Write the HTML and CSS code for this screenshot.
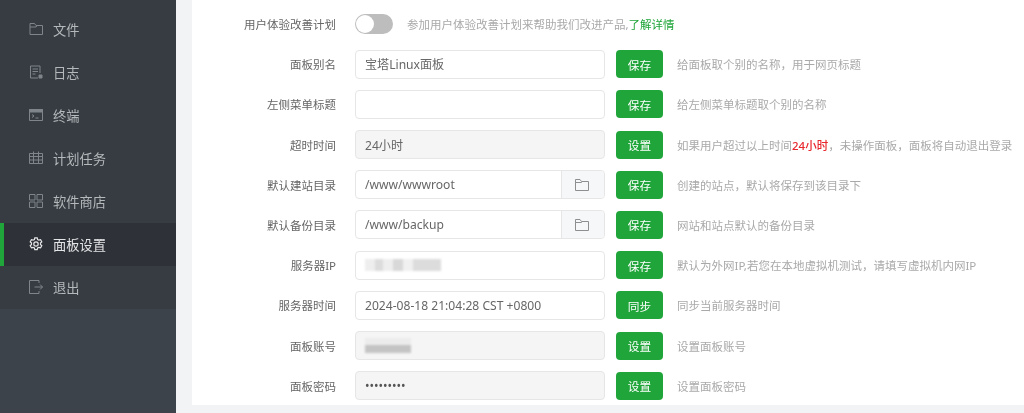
FILE: index.html
```html
<!DOCTYPE html>
<html lang="zh-CN">
<head>
  <meta charset="UTF-8" />
  <meta name="viewport" content="width=device-width, initial-scale=1.0" />
  <title>面板设置</title>
  <link rel="stylesheet" href="styles.css">
</head>
<body>
  <div class="sidebar">
    <ul class="menu">
      <li class="menu-item">
        <svg class="menu-icon" viewBox="0 0 14 14"><path d="M1 12.500V1.500h4.500l1.500 2h6.500v9z M1 5h6l1-1.500"/></svg>
        <span>文件</span>
      </li>
      <li class="menu-item">
        <svg class="menu-icon" viewBox="0 0 14 14"><path d="M11 8V1H1.500v12H9 M3.500 4h5.500 M3.500 6.500h5.500 M3.500 9h3"/><path class="solid" d="M10 10h3v3h-3z"/></svg>
        <span>日志</span>
      </li>
      <li class="menu-item">
        <svg class="menu-icon" viewBox="0 0 14 14"><path d="M.5 1.500h13v11H.5z M3 6.500l2 1.500-2 1.500 M6.500 10h3"/><path class="solid" d="M.5 1.500h13v2.500H.5z"/></svg>
        <span>终端</span>
      </li>
      <li class="menu-item">
        <svg class="menu-icon" viewBox="0 0 14 14"><path d="M.5 2.500h13v10H.5z M.5 5.500h13 M.5 9h13 M4.500 .5v12 M9.500 .5v12"/></svg>
        <span>计划任务</span>
      </li>
      <li class="menu-item">
        <svg class="menu-icon" viewBox="0 0 14 14"><path d="M.5 .5h5.500v5.500H.5z M8 .5h5.500v5.500H8z M.5 8h5.500v5.500H.5z M8 8h5.500v5.500H8z"/></svg>
        <span>软件商店</span>
      </li>
      <li class="menu-item active">
        <svg class="menu-icon" viewBox="0 0 14 14"><path d="M5.800 .8h2.400l.4 1.700 1.300.7 1.700-.5 1.200 2.100-1.300 1.200v1.500l1.300 1.200-1.200 2.100-1.700-.5-1.300.7-.4 1.700H5.800l-.4-1.700-1.300-.7-1.700.5-1.200-2.100 1.300-1.200V6L1.200 4.800l1.200-2.100 1.700.5 1.300-.7z"/><circle cx="7" cy="7" r="2.200"/></svg>
        <span>面板设置</span>
      </li>
      <li class="menu-item">
        <svg class="menu-icon" viewBox="0 0 14 14"><path d="M10 3V.5H.5v13H10V11 M5.500 7h8 M11 4.500L13.500 7 11 9.500"/></svg>
        <span>退出</span>
      </li>
    </ul>
  </div>

  <div class="main">
    <div class="card">
      <div class="row">
        <label class="row-label">用户体验改善计划</label>
        <span class="switch"><span class="knob"></span></span>
        <span class="switch-hint">参加用户体验改善计划来帮助我们改进产品,<a class="link">了解详情</a></span>
      </div>

      <div class="row">
        <label class="row-label">面板别名</label>
        <div class="field">宝塔Linux面板</div>
        <button class="btn">保存</button>
        <span class="hint">给面板取个别的名称，用于网页标题</span>
      </div>

      <div class="row">
        <label class="row-label">左侧菜单标题</label>
        <div class="field"></div>
        <button class="btn">保存</button>
        <span class="hint">给左侧菜单标题取个别的名称</span>
      </div>

      <div class="row">
        <label class="row-label">超时时间</label>
        <div class="field disabled">24小时</div>
        <button class="btn">设置</button>
        <span class="hint">如果用户超过以上时间<b class="warn">24小时</b>，未操作面板，面板将自动退出登录</span>
      </div>

      <div class="row">
        <label class="row-label">默认建站目录</label>
        <div class="field with-addon">
          <span class="field-text">/www/wwwroot</span>
          <span class="addon"><svg class="folder" viewBox="0 0 14 12"><path d="M.5 11.500V.5h4.500l1.500 2h7v9z M.5 3.500h6l1-1"/></svg></span>
        </div>
        <button class="btn">保存</button>
        <span class="hint">创建的站点，默认将保存到该目录下</span>
      </div>

      <div class="row">
        <label class="row-label">默认备份目录</label>
        <div class="field with-addon">
          <span class="field-text">/www/backup</span>
          <span class="addon"><svg class="folder" viewBox="0 0 14 12"><path d="M.5 11.500V.5h4.500l1.500 2h7v9z M.5 3.500h6l1-1"/></svg></span>
        </div>
        <button class="btn">保存</button>
        <span class="hint">网站和站点默认的备份目录</span>
      </div>

      <div class="row">
        <label class="row-label">服务器IP</label>
        <div class="field"><span class="masked masked-ip"></span></div>
        <button class="btn">保存</button>
        <span class="hint">默认为外网IP,若您在本地虚拟机测试，请填写虚拟机内网IP</span>
      </div>

      <div class="row">
        <label class="row-label">服务器时间</label>
        <div class="field">2024-08-18 21:04:28 CST +0800</div>
        <button class="btn">同步</button>
        <span class="hint">同步当前服务器时间</span>
      </div>

      <div class="row">
        <label class="row-label">面板账号</label>
        <div class="field disabled"><span class="masked masked-user"></span></div>
        <button class="btn">设置</button>
        <span class="hint">设置面板账号</span>
      </div>

      <div class="row">
        <label class="row-label">面板密码</label>
        <div class="field disabled pass">•••••••••</div>
        <button class="btn">设置</button>
        <span class="hint">设置面板密码</span>
      </div>
    </div>
  </div>
</body>
</html>
```

FILE: styles.css
```css
* { margin: 0; padding: 0; box-sizing: border-box; }
html, body {
  height: 100%;
  overflow: hidden;
}
body {
  display: flex;
  background: #f2f3f5;
  font-family: "Noto Sans", "Noto Sans CJK SC", sans-serif;
  font-size: 11.5px;
  color: #666;
}

/* sidebar */
.sidebar {
  width: 176px;
  height: 100%;
  background: #3d434b;
  filter: blur(.35px);
}
.menu {
  list-style: none;
  padding-top: 7.5px;
  background: #363c42;
}
.menu-item {
  display: flex;
  align-items: center;
  gap: 10px;
  height: 43px;
  padding-left: 29px;
  font-size: 13.25px;
  color: #b5b9bc;
}
.menu-item.active {
  background: #2e3138;
  border-left: 4px solid #20a53a;
  padding-left: 25px;
  color: #e4e5e6;
}
.menu-icon {
  width: 14px;
  height: 14px;
  fill: none;
  stroke: #7f858a;
  stroke-width: 1;
}
.menu-icon .solid {
  fill: #7f858a;
}
.menu-item.active .menu-icon {
  stroke: #e4e5e6;
  stroke-width: 1.2;
}

/* main */
.main {
  flex: 1;
  padding-left: 16px;
}
.card {
  height: 405px;
  background: #fff;
  padding-top: 9.5px;
  display: flex;
  flex-direction: column;
  gap: 11.2px;
  filter: blur(.35px);
}
.row {
  display: flex;
  align-items: center;
  height: 29px;
}
.row-label {
  width: 144px;
  margin-right: 19px;
  text-align: right;
  color: #666;
}
.switch {
  width: 38px;
  height: 20px;
  border-radius: 10px;
  background: #bdbdbd;
  padding: 1px;
  margin-right: 14px;
}
.knob {
  display: block;
  width: 18px;
  height: 18px;
  border-radius: 50%;
  background: #fff;
}
.switch-hint { color: #a9a9a9; }
.link { color: #20a53a; }

.field {
  display: flex;
  align-items: center;
  width: 250px;
  height: 29px;
  margin-right: 11px;
  padding-left: 9px;
  border: 1px solid #e6e6e6;
  border-radius: 4px;
  background: #fff;
  font-size: 12.1px;
  color: #666;
}
.field.disabled { background: #f5f5f5; }
.field.pass { font-size: 12px; color: #555; }
.with-addon { padding-left: 0; }
.field-text {
  flex: 1;
  padding-left: 9px;
}
.addon {
  display: flex;
  align-items: center;
  justify-content: center;
  width: 43px;
  height: 100%;
  padding-right: 3px;
  background: #f6f7f9;
  border-left: 1px solid #e6e6e6;
  border-radius: 0 4px 4px 0;
}
.folder {
  width: 14px;
  height: 12px;
  fill: none;
  stroke: #8e8e8e;
  stroke-width: 1;
}
.masked {
  display: block;
  height: 12px;
  filter: blur(1px);
}
.masked-ip {
  width: 76px;
  background: linear-gradient(90deg, #eee 0 10px, #dcdcdc 10px 18px, #eee 18px 28px, #d8d8d8 28px 38px, #f0f0f0 38px 48px, #dcdcdc 48px 76px);
}
.masked-user {
  width: 46px;
  height: 15px;
  background: linear-gradient(#ececec 0 7px, #c4c4c4 7px 15px);
}

.btn {
  width: 47px;
  height: 28px;
  margin-right: 14px;
  border: none;
  border-radius: 4px;
  background: #20a53a;
  color: #fff;
  font-family: inherit;
  font-size: 11.7px;
}
.hint { color: #a9a9a9; white-space: nowrap; }
.warn { color: #e8262d; font-weight: 500; }
```
